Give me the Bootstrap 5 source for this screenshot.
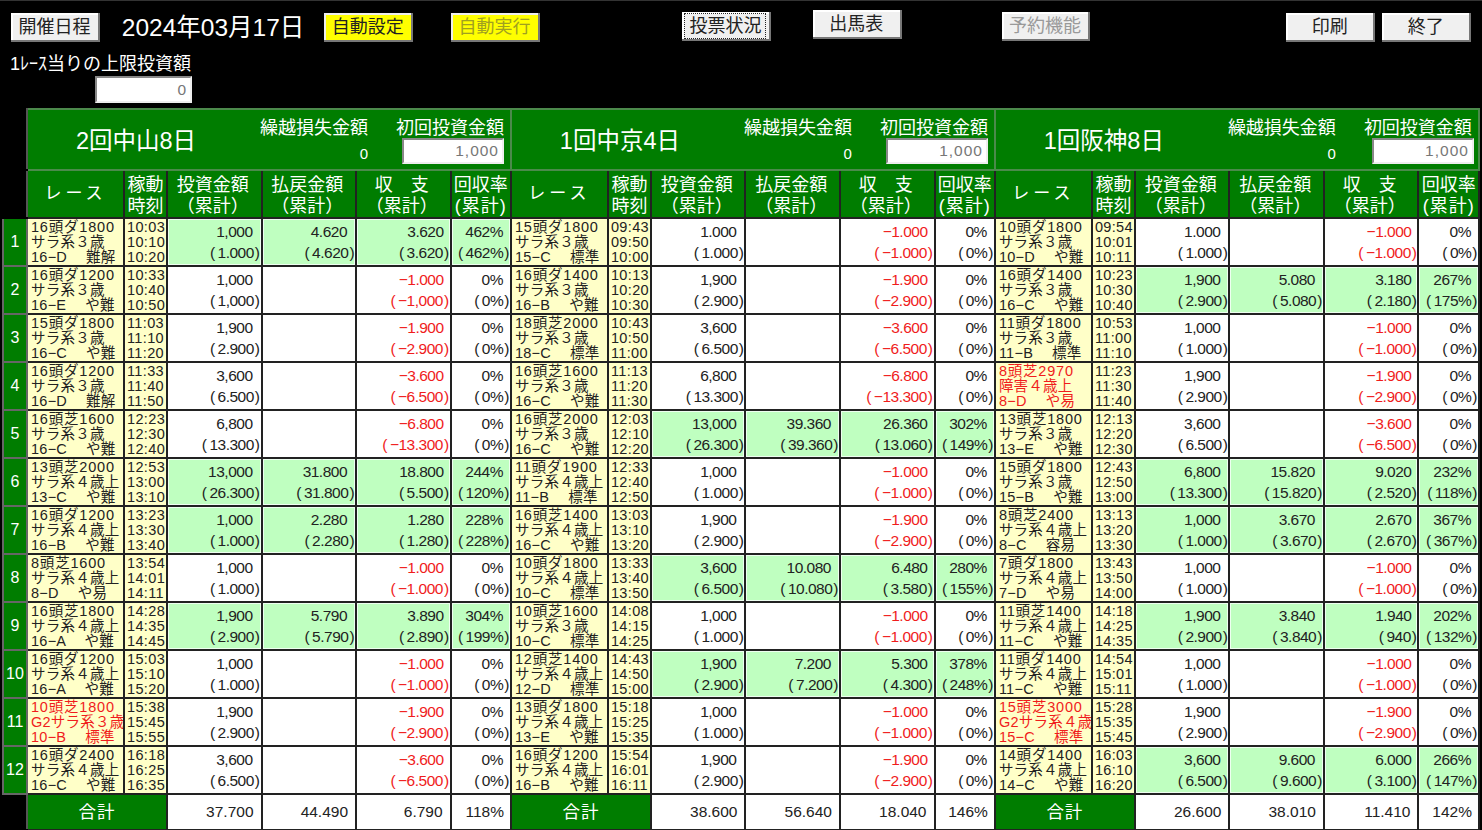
<!DOCTYPE html>
<html lang="ja">
<head>
    <meta charset="UTF-8">
    <meta name="viewport" content="width=device-width, initial-scale=1.0">
    <title>投票状況</title>
    <link href="https://cdn.jsdelivr.net/npm/bootstrap@5.3.0/dist/css/bootstrap.min.css" rel="stylesheet">
    <style>
        html, body { height: 830px; overflow: hidden; background: #000; }
        body { font-family: "Liberation Sans", "Noto Sans CJK JP", sans-serif; color: #fff; border-top: 1px solid #333; }

        /* top bar */
        .top-bar { height: 51px; padding: 12px 11px 0; }
        .win-btn {
            width: 89px; height: 29px; padding: 0 2px 0 0; border-radius: 0; font-size: 18px; line-height: 25px; color: #222;
            background: #f0f0f0; border: 0; box-shadow: inset -2px -2px 0 #777, inset 2px 2px 0 #fff;
        }
        .win-btn:disabled { opacity: 1; background: #f0f0f0; color: #999; }
        .win-btn.yellow, .win-btn.yellow:disabled { background: #ffff00; box-shadow: inset -2px -2px 0 #777, inset 2px 2px 0 #eee; }
        .win-btn.yellow:disabled { color: #a0a020; }
        .win-btn.focused span { outline: 1px dotted #222; padding: 2px 4px; }
        .date-text { width: 203px; margin-left: 22px; font-size: 24.5px; line-height: 29px; }
        .ms-yellow2 { margin-left: 38px; }
        .ms-vote { margin-left: 142px; margin-top: -1px; }
        .ms-table { margin-left: 42px; margin-top: -3px; }
        .ms-reserve { margin-left: 100px; margin-top: -1px; }
        .ms-print { margin-left: 196px; }
        .ms-end { margin-left: 7px; }

        .limit-box { height: 56px; padding-left: 10px; }
        .limit-label { font-size: 18px; line-height: 24px; }
        .limit-input { margin: 0 0 0 85px; width: 97px; height: 27px; }
        .num-input {
            padding: 0 3px 0 0; border-radius: 0; text-align: right; font-size: 15.5px; letter-spacing: 1px; color: #777;
            background: #fff; border: 2px solid; border-color: #888 #eee #eee #888;
        }
        .num-input:focus { box-shadow: none; color: #777; border-color: #888 #eee #eee #888; }

        /* grid */
        .table.race-table { width: 1478px; margin: 0 0 0 2px; table-layout: fixed; border-collapse: collapse; --bs-table-bg: transparent; }
        .table.race-table > * > tr > * {
            padding: 0; border: 2px solid #222; background: #fff; color: #222; box-shadow: none; overflow: hidden; vertical-align: middle;
        }
        .table.race-table > * > tr > .blank { background: #000; border-color: #000; border-right-color: #555; }
        .table.race-table > * > tr > .green { background: #007d00; color: #fff; font-weight: 400; text-align: center; }
        .table.race-table > * > tr > .venue { border: 2px solid #4b8a4b; }
        .table.race-table > * > tr > .no { border-color: #666; font-size: 16px; }
        .table.race-table > * > tr > .race { background: #ffffc8; font-size: 14.5px; line-height: 15px; padding: 1px 0 0 3px; letter-spacing: .25px; white-space: nowrap; }
        .table.race-table > * > tr > .race.red { color: #f01c1c; }
        .table.race-table > * > tr > .time { background: #ffffc8; font-size: 14.5px; line-height: 15px; padding: 1px 0 0 2px; letter-spacing: .35px; }
        .table.race-table > * > tr > .num { text-align: right; font-size: 15.5px; line-height: 21px; letter-spacing: -.5px; padding-right: 1px; white-space: nowrap; }
        .table.race-table > * > tr > .win { background: #bfffc0; box-shadow: inset 0 0 0 1px #eefff0; }
        .table.race-table > * > tr > .minus { color: #f01c1c; }
        .table.race-table > * > tr > .sum { font-size: 15.5px; text-align: right; padding-right: 7px; }
        .table.race-table > * > tr > .sum.rate { padding-right: 6px; }
        .table.race-table > * > tr > .col-title { font-size: 18px; line-height: 21px; padding-top: 4px; white-space: nowrap; }
        .table.race-table > * > tr > .col-money { padding-right: 3px; }
        .table.race-table > * > tr > .title-race { font-size: 17px; letter-spacing: 4px; }

        .row-head { height: 61px; }
        .row-cols { height: 48px; }
        .row-race { height: 48px; }
        .row-total { height: 36px; }
        .race-head { letter-spacing: .8px; }
        .line1 { padding-right: 7px; }
        .bal .line1 { padding-right: 5px; }
        .rate .line1 { padding-right: 6px; }
        .lp { margin-right: 3px; }
        .rp { margin-left: 1px; }
        .rate-total { letter-spacing: 1px; }

        .venue-head { height: 57px; }
        .venue-name { width: 216px; font-size: 23.5px; line-height: 30px; padding-top: 15px; margin-right: 16px; text-align: center; }
        .venue-block { width: 108px; font-size: 18px; line-height: 22px; padding-top: 6px; }
        .venue-carry { font-size: 15px; line-height: 23px; text-align: right; padding-top: 3px; }
        .venue-gap { margin-left: 28px; }
        .venue-input { display: block; width: 102px; height: 26px; margin: -1px 0 0 auto; }
        .venue-last .venue-input { margin-right: -2px; }
        .total-label { font-size: 17.5px; letter-spacing: 1px; }
    </style>
</head>
<body>
    <!-- Buttons -->
    <div class="top-bar d-flex align-items-start">
        <button class="btn win-btn" type="button">開催日程</button>
        <div class="date-text">2024年03月17日</div>
        <button class="btn win-btn yellow" type="button">自動設定</button>
        <button class="btn win-btn yellow ms-yellow2" type="button" disabled>自動実行</button>
        <button class="btn win-btn focused ms-vote" type="button"><span>投票状況</span></button>
        <button class="btn win-btn ms-table" type="button">出馬表</button>
        <button class="btn win-btn ms-reserve" type="button" disabled>予約機能</button>
        <button class="btn win-btn ms-print" type="button">印刷</button>
        <button class="btn win-btn ms-end" type="button">終了</button>
    </div>
    <div class="limit-box">
        <div class="limit-label">1ﾚｰｽ当りの上限投資額</div>
        <input class="form-control num-input limit-input" type="text" value="0" readonly>
    </div>

    <!-- Race table -->
    <table class="table race-table">
        <colgroup id="tableCols"></colgroup>
        <thead id="tableHead"></thead>
        <tbody id="tableBody"></tbody>
        <tfoot id="tableFoot"></tfoot>
    </table>

    <script src="https://cdn.jsdelivr.net/npm/bootstrap@5.3.0/dist/js/bootstrap.bundle.min.js"></script>
    <script>
        // race|class|code|condition|t1|t2|t3|inv|invTotal[|pay|payTotal|bal|balTotal|rate|rateTotal], ! = graded race shown in red
        const venues = [
            { name: '2回中山8日', total: ['37.700', '44.490', '6.790', '118%'], races: [
                '16頭ダ1800|サラ系３歳|16−D|難解|10:03|10:10|10:20|1,000|1.000|4.620|4.620|3.620|3.620|462%|462%',
                '16頭ダ1200|サラ系３歳|16−E|や難|10:33|10:40|10:50|1,000|1,000',
                '15頭ダ1800|サラ系３歳|16−C|や難|11:03|11:10|11:20|1,900|2.900',
                '16頭ダ1200|サラ系３歳|16−D|難解|11:33|11:40|11:50|3,600|6.500',
                '16頭芝1600|サラ系３歳|16−C|や難|12:23|12:30|12:40|6,800|13.300',
                '13頭芝2000|サラ系４歳上|13−C|や難|12:53|13:00|13:10|13,000|26.300|31.800|31.800|18.800|5.500|244%|120%',
                '16頭ダ1200|サラ系４歳上|16−B|や難|13:23|13:30|13:40|1,000|1.000|2.280|2.280|1.280|1.280|228%|228%',
                '8頭芝1600|サラ系４歳上|8−D|や易|13:54|14:01|14:11|1,000|1.000',
                '16頭芝1800|サラ系４歳上|16−A|や難|14:28|14:35|14:45|1,900|2.900|5.790|5.790|3.890|2.890|304%|199%',
                '16頭ダ1200|サラ系４歳上|16−A|や難|15:03|15:10|15:20|1,000|1.000',
                '!10頭芝1800|G2サラ系３歳|10−B|標準|15:38|15:45|15:55|1,900|2.900',
                '16頭ダ2400|サラ系４歳上|16−C|や難|16:18|16:25|16:35|3,600|6.500'
            ] },
            { name: '1回中京4日', total: ['38.600', '56.640', '18.040', '146%'], races: [
                '15頭ダ1800|サラ系３歳|15−C|標準|09:43|09:50|10:00|1.000|1.000',
                '16頭ダ1400|サラ系３歳|16−B|や難|10:13|10:20|10:30|1,900|2.900',
                '18頭芝2000|サラ系３歳|18−C|標準|10:43|10:50|11:00|3,600|6.500',
                '16頭芝1600|サラ系３歳|16−C|や難|11:13|11:20|11:30|6,800|13.300',
                '16頭芝2000|サラ系３歳|16−C|や難|12:03|12:10|12:20|13,000|26.300|39.360|39.360|26.360|13.060|302%|149%',
                '11頭ダ1900|サラ系４歳上|11−B|標準|12:33|12:40|12:50|1,000|1.000',
                '16頭芝1400|サラ系４歳上|16−C|や難|13:03|13:10|13:20|1,900|2.900',
                '10頭ダ1800|サラ系４歳上|10−C|標準|13:33|13:40|13:50|3,600|6.500|10.080|10.080|6.480|3.580|280%|155%',
                '10頭芝1600|サラ系３歳|10−C|標準|14:08|14:15|14:25|1,000|1.000',
                '12頭芝1400|サラ系４歳上|12−D|標準|14:43|14:50|15:00|1,900|2.900|7.200|7.200|5.300|4.300|378%|248%',
                '13頭ダ1800|サラ系４歳上|13−E|や難|15:18|15:25|15:35|1,000|1.000',
                '16頭ダ1200|サラ系４歳上|16−B|や難|15:54|16:01|16:11|1,900|2.900'
            ] },
            { name: '1回阪神8日', total: ['26.600', '38.010', '11.410', '142%'], cls: 'venue-last', races: [
                '10頭ダ1800|サラ系３歳|10−D|や難|09:54|10:01|10:11|1.000|1.000',
                '16頭ダ1400|サラ系３歳|16−C|や難|10:23|10:30|10:40|1,900|2.900|5.080|5.080|3.180|2.180|267%|175%',
                '11頭ダ1800|サラ系３歳|11−B|標準|10:53|11:00|11:10|1,000|1.000',
                '!8頭芝2970|障害４歳上|8−D|や易|11:23|11:30|11:40|1,900|2.900',
                '13頭芝1800|サラ系３歳|13−E|や難|12:13|12:20|12:30|3,600|6.500',
                '15頭ダ1800|サラ系３歳|15−B|や難|12:43|12:50|13:00|6,800|13.300|15.820|15.820|9.020|2.520|232%|118%',
                '8頭芝2400|サラ系４歳上|8−C|容易|13:13|13:20|13:30|1,000|1.000|3.670|3.670|2.670|2.670|367%|367%',
                '7頭ダ1800|サラ系４歳上|7−D|や易|13:43|13:50|14:00|1,000|1.000',
                '11頭芝1400|サラ系４歳上|11−C|や難|14:18|14:25|14:35|1,900|2.900|3.840|3.840|1.940|940|202%|132%',
                '11頭ダ1400|サラ系４歳上|11−C|や難|14:54|15:01|15:11|1,000|1.000',
                '!15頭芝3000|G2サラ系４歳|15−C|標準|15:28|15:35|15:45|1,900|2.900',
                '14頭ダ1400|サラ系４歳上|14−C|や難|16:03|16:10|16:20|3,600|6.500|9.600|9.600|6.000|3.100|266%|147%'
            ] }
        ];

        const colWidths = [97, 43, 94.5, 94.5, 94.5, 60.3];

        function twoLines(first, second, cls) {
            return `<td class="num ${cls}"><div class="line1">${first}</div><div><span class="lp">(</span>${second}<span class="rp">)</span></div></td>`;
        }

        function raceCells(text) {
            const red = text.startsWith('!');
            const p = text.replace('!', '').split('|');
            const win = p.length > 9 ? 'win' : '';
            let cells = `<td class="race ${red ? 'red' : ''}"><span class="race-head">${p[0]}</span><br>${p[1]}<br>${p[2]}　 ${p[3]}</td>`;
            cells += `<td class="time">${p[4]}<br>${p[5]}<br>${p[6]}</td>`;
            cells += twoLines(p[7], p[8], win);
            if (win) {
                cells += twoLines(p[9], p[10], win);
                cells += twoLines(p[11], p[12], win + ' bal');
                cells += twoLines(p[13], p[14], win + ' rate');
            } else {
                // no payout: the stake is the loss
                cells += '<td class="num"></td>';
                cells += twoLines('−' + p[7].replace(',', '.'), '−' + p[8], 'minus bal');
                cells += twoLines('0%', '0%', 'rate');
            }
            return cells;
        }

        let cols = '<col style="width:24px">';
        let head1 = '<tr class="row-head"><th class="blank"></th>';
        let head2 = '<tr class="row-cols"><th class="blank"></th>';
        let foot = '<tr class="row-total"><td class="blank"></td>';
        const rows = [];

        venues.forEach(v => {
            colWidths.forEach(w => { cols += `<col style="width:${w}px">`; });
            head1 += `<th class="green venue" colspan="6"><div class="venue-head d-flex ${v.cls || ''}">
                <div class="venue-name">${v.name}</div>
                <div class="venue-block">繰越損失金額<div class="venue-carry">0</div></div>
                <div class="venue-block venue-gap">初回投資金額<input class="form-control num-input venue-input" type="text" value="1,000" readonly></div>
            </div></th>`;
            head2 += `<th class="green title-race">レース</th>
                <th class="green col-title">稼動<br>時刻</th>
                <th class="green col-title col-money">投資金額<br>（累計）</th>
                <th class="green col-title col-money">払戻金額<br>（累計）</th>
                <th class="green col-title col-money">収　支<br>（累計）</th>
                <th class="green col-title">回収率<br><span class="rate-total">(累計)</span></th>`;
            foot += `<td class="green total-label" colspan="2">合計</td>`;
            v.total.forEach((t, i) => { foot += `<td class="sum ${i === 3 ? 'rate' : ''}">${t}</td>`; });
            v.races.forEach((r, i) => { rows[i] = (rows[i] || '') + raceCells(r); });
        });

        document.getElementById('tableCols').innerHTML = cols;
        document.getElementById('tableHead').innerHTML = head1 + '</tr>' + head2 + '</tr>';
        document.getElementById('tableBody').innerHTML = rows
            .map((r, i) => `<tr class="row-race"><td class="green no">${i + 1}</td>${r}</tr>`).join('');
        document.getElementById('tableFoot').innerHTML = foot + '</tr>';
    </script>
</body>
</html>
